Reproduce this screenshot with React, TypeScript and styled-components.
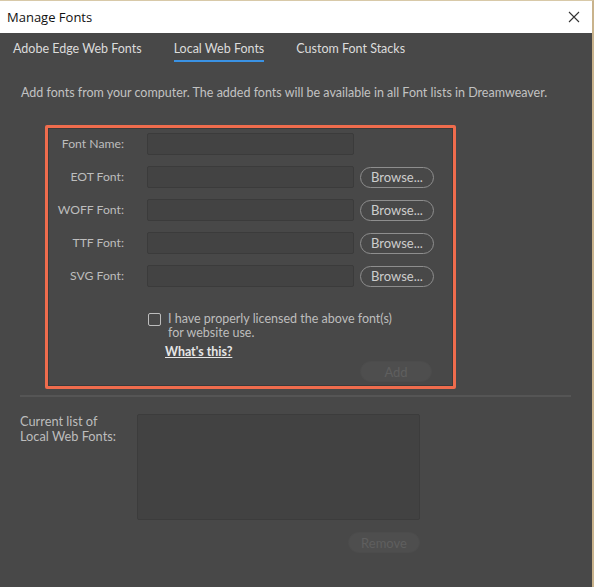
import React from 'react'
import styled, { createGlobalStyle } from 'styled-components'

const GlobalStyle = createGlobalStyle`
  html, body {
    margin: 0;
    padding: 0;
    background: #484848;
  }
`

const uiFont = `Lato, "Open Sans", sans-serif`

const Window = styled.div`
  width: 594px;
  height: 587px;
  box-sizing: border-box;
  border-top: 1px solid #d8c9a8;
  border-right: 2px solid #c9b38c;
  display: flex;
  flex-direction: column;
  background: #484848;
  overflow: hidden;
`

const TitleBar = styled.div`
  height: 32px;
  flex: none;
  background: #ffffff;
  display: flex;
  align-items: center;
  justify-content: space-between;
  padding: 0 10px 0 7px;
  font-family: 'Segoe UI', 'Open Sans', sans-serif;
  font-size: 13px;
  color: #111;
`

const CloseButton = styled.button`
  border: 0;
  background: none;
  padding: 0;
  width: 16px;
  height: 16px;
  display: flex;
  align-items: center;
  justify-content: center;
`

const Content = styled.div`
  flex: 1;
  display: flex;
  flex-direction: column;
  font-family: ${uiFont};
  color: #c4c4c4;
`

const TabBar = styled.div`
  display: flex;
  gap: 32px;
  padding: 7px 0 0 13px;
  height: 22px;
`

const Tab = styled.div<{ active?: boolean }>`
  font-size: 12.5px;
  color: #dcdcdc;
  line-height: 18px;
  padding-bottom: 2px;
  border-bottom: 2px solid ${({ active }) => (active ? '#3a92e4' : 'transparent')};
  align-self: flex-start;
`

const Description = styled.p`
  margin: 23px 0 0 21px;
  font-size: 12.5px;
  line-height: 16px;
  color: #c2c2c2;
`

const Highlight = styled.section`
  margin: 24px 0 0 45px;
  width: 411px;
  height: 264px;
  box-sizing: border-box;
  border: 3px solid #ef6c4d;
  border-radius: 2px;
  box-shadow: inset 0 0 0 1px #3a3a3a;
  padding: 5px 0 0 0;
  display: flex;
  flex-direction: column;
`

const FormGrid = styled.div`
  display: grid;
  grid-template-columns: 76px 207px 74px;
  column-gap: 23px;
  row-gap: 11px;
  align-items: center;
`

const Label = styled.label`
  text-align: right;
  font-size: 12.2px;
  color: #bdbdbd;
  line-height: 22px;
`

const TextInput = styled.div`
  height: 22px;
  box-sizing: border-box;
  background: #434343;
  border: 1px solid #3b3b3b;
  border-radius: 2px;
`

const PillButton = styled.button<{ disabled?: boolean; width?: number; offset?: number }>`
  height: 21px;
  width: ${({ width }) => width ?? 74}px;
  box-sizing: border-box;
  border-radius: 11px;
  border: 1px solid ${({ disabled }) => (disabled ? '#4c4c4c' : '#8e8e8e')};
  background: ${({ disabled }) => (disabled ? '#4e4e4e' : '#484848')};
  color: ${({ disabled }) => (disabled ? '#5f5f5f' : '#cdcdcd')};
  font-family: ${uiFont};
  font-size: 13px;
  padding: 0;
  margin-left: ${({ offset }) => offset ?? -17}px;
  cursor: pointer;
`

const LicenseRow = styled.div`
  display: flex;
  align-items: flex-start;
  gap: 7px;
  margin: 25px 0 0 100px;
`

const Checkbox = styled.span`
  width: 11px;
  height: 11px;
  margin-top: 1px;
  border: 1.5px solid #bdbdbd;
  border-radius: 2px;
  flex: none;
`

const LicenseText = styled.div`
  font-size: 12.5px;
  line-height: 14px;
  color: #bdbdbd;
`

const HelpLink = styled.a`
  margin: 4px 0 0 117px;
  font-size: 12.4px;
  font-weight: 700;
  color: #e6e6e6;
  text-decoration: underline;
  align-self: flex-start;
`

const AddRow = styled.div`
  display: flex;
  margin: 2px 0 0 329px;
`

const Separator = styled.hr`
  margin: 6px 0 0 20px;
  width: 551px;
  border: 0;
  border-top: 2px solid #555555;
`

const ListSection = styled.div`
  display: grid;
  grid-template-columns: 117px 283px;
  margin: 17px 0 0 20px;
`

const ListLabel = styled.div`
  font-size: 12.8px;
  line-height: 15px;
  color: #bdbdbd;
`

const ListBox = styled.div`
  height: 106px;
  box-sizing: border-box;
  background: #424242;
  border: 1px solid #3c3c3c;
  border-radius: 2px;
`

const RemoveRow = styled.div`
  grid-column: 2;
  display: flex;
  justify-content: flex-end;
  margin-top: 12px;
`

const browseRows = ['EOT Font:', 'WOFF Font:', 'TTF Font:', 'SVG Font:']

export default function App() {
  return (
    <>
      <GlobalStyle />
      <Window>
        <TitleBar>
          <span>Manage Fonts</span>
          <CloseButton aria-label="Close">
            <svg width="12" height="12" viewBox="0 0 12 12">
              <path d="M1 1 L11 11 M11 1 L1 11" stroke="#333" strokeWidth="1.1" />
            </svg>
          </CloseButton>
        </TitleBar>
        <Content>
          <TabBar>
            <Tab>Adobe Edge Web Fonts</Tab>
            <Tab active>Local Web Fonts</Tab>
            <Tab>Custom Font Stacks</Tab>
          </TabBar>
          <Description>
            Add fonts from your computer. The added fonts will be available in all Font lists in Dreamweaver.
          </Description>
          <Highlight>
            <FormGrid>
              <Label>Font Name:</Label>
              <TextInput />
              <span />
              {browseRows.map((label) => (
                <React.Fragment key={label}>
                  <Label>{label}</Label>
                  <TextInput />
                  <PillButton>Browse...</PillButton>
                </React.Fragment>
              ))}
            </FormGrid>
            <LicenseRow>
              <Checkbox />
              <LicenseText>
                I have properly licensed the above font(s)
                <br />
                for website use.
              </LicenseText>
            </LicenseRow>
            <HelpLink href="#">What's this?</HelpLink>
            <AddRow>
              <PillButton disabled width={72}>
                Add
              </PillButton>
            </AddRow>
          </Highlight>
          <Separator />
          <ListSection>
            <ListLabel>
              Current list of
              <br />
              Local Web Fonts:
            </ListLabel>
            <ListBox />
            <RemoveRow>
              <PillButton disabled width={72} offset={0}>
                Remove
              </PillButton>
            </RemoveRow>
          </ListSection>
        </Content>
      </Window>
    </>
  )
}
